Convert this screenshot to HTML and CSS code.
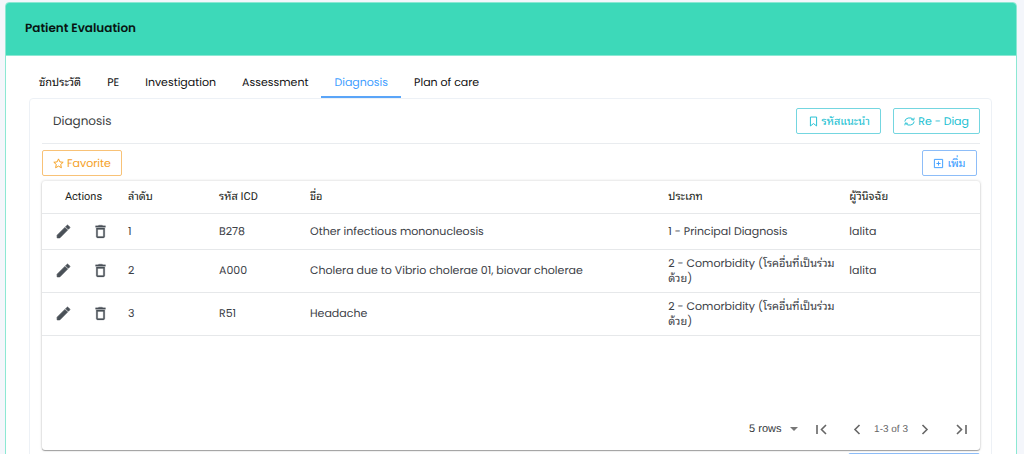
FILE: index.html
```html
<!DOCTYPE html>
<html lang="th">
<head>
<meta charset="utf-8">
<title>Patient Evaluation</title>
<link rel="stylesheet" href="styles.css">
</head>
<body>
<svg class="defs" aria-hidden="true">
  <symbol id="edit" viewBox="0 0 24 24"><path d="M3 17.25V21h3.75L17.81 9.94l-3.75-3.75L3 17.25zM20.71 7.04a1 1 0 0 0 0-1.41l-2.34-2.34a1 1 0 0 0-1.41 0l-1.83 1.83 3.75 3.75 1.83-1.83z" stroke="currentColor" stroke-width="1" stroke-linejoin="round"/></symbol>
  <symbol id="trash" viewBox="0 0 24 24"><path d="M6 19c0 1.1.9 2 2 2h8c1.1 0 2-.9 2-2V7H6v12zM8 9h8v10H8V9zm7.5-5l-1-1h-5l-1 1H5v2h14V4z" stroke="currentColor" stroke-width=".4"/></symbol>
</svg>
<main class="card">
  <header class="card-header"><h1 class="title">Patient Evaluation</h1></header>
  <div class="card-body">
    <nav class="tabs">
      <a class="tab" href="#history">ซักประวัติ</a>
      <a class="tab" href="#pe">PE</a>
      <a class="tab" href="#investigation">Investigation</a>
      <a class="tab" href="#assessment">Assessment</a>
      <a class="tab active" href="#diagnosis" aria-current="page">Diagnosis</a>
      <a class="tab" href="#plan">Plan of care</a>
    </nav>
    <section class="panel">
      <div class="panel-head">
        <h2 class="panel-title">Diagnosis</h2>
        <div class="actions">
          <button class="btn cyan" type="button"><svg class="icon" viewBox="0 0 16 16"><path d="M3.5 1.5h9v13L8 11l-4.500 3.500z"/></svg>รหัสแนะนำ</button>
          <button class="btn cyan" type="button"><svg class="icon" viewBox="0 0 16 16"><path d="M1.200 8a6.800 5.600 0 0 1 12.300-3M14.800 8a6.800 5.600 0 0 1-12.300 3M14.800 2.500l-.8 3.500-3.500-.8M1.200 13.500l.8-3.500 3.500.8"/></svg>Re - Diag</button>
        </div>
      </div>
      <div class="toolbar">
        <button class="btn orange" type="button"><svg class="icon" viewBox="0 0 16 16"><path d="M8 1.300l2 4.400 4.800.5-3.600 3.200 1 4.800L8 11.800l-4.200 2.400 1-4.800L1.200 6.200 6 5.700z"/></svg>Favorite</button>
        <button class="btn blue" type="button"><svg class="icon" viewBox="0 0 16 16"><path d="M2 2h12v12H2zM8 5v6M5 8h6"/></svg>เพิ่ม</button>
      </div>
      <div class="sheet">
        <table class="grid">
          <colgroup><col class="c-act"><col class="c-no"><col class="c-icd"><col class="c-name"><col class="c-type"><col class="c-by"></colgroup>
          <thead>
            <tr><th class="center">Actions</th><th>ลำดับ</th><th>รหัส ICD</th><th>ชื่อ</th><th>ประเภท</th><th>ผู้วินิจฉัย</th></tr>
          </thead>
          <tbody>
            <tr>
              <td class="tools"><div class="tool-row"><button class="tool" type="button" aria-label="Edit"><svg><use href="#edit"/></svg></button><button class="tool" type="button" aria-label="Delete"><svg><use href="#trash"/></svg></button></div></td>
              <td>1</td><td>B278</td><td>Other infectious mononucleosis</td><td>1 - Principal Diagnosis</td><td>lalita</td>
            </tr>
            <tr>
              <td class="tools"><div class="tool-row"><button class="tool" type="button" aria-label="Edit"><svg><use href="#edit"/></svg></button><button class="tool" type="button" aria-label="Delete"><svg><use href="#trash"/></svg></button></div></td>
              <td>2</td><td>A000</td><td>Cholera due to Vibrio cholerae 01, biovar cholerae</td><td>2 - Comorbidity (โรคอื่นที่เป็นร่วม<br>ด้วย)</td><td>lalita</td>
            </tr>
            <tr>
              <td class="tools"><div class="tool-row"><button class="tool" type="button" aria-label="Edit"><svg><use href="#edit"/></svg></button><button class="tool" type="button" aria-label="Delete"><svg><use href="#trash"/></svg></button></div></td>
              <td>3</td><td>R51</td><td>Headache</td><td>2 - Comorbidity (โรคอื่นที่เป็นร่วม<br>ด้วย)</td><td></td>
            </tr>
          </tbody>
        </table>
        <div class="pager">
          <div class="select-wrap">
            <select class="rows" aria-label="Rows per page"><option>5 rows</option><option>10 rows</option></select>
            <svg class="caret" viewBox="0 0 8 4"><path d="M0 0h8L4 4z"/></svg>
          </div>
          <button class="page" type="button" aria-label="First page"><svg viewBox="0 0 18 18"><path d="M5 5v9M14 5L9.500 9.500 14 14"/></svg></button>
          <button class="page" type="button" aria-label="Previous page"><svg viewBox="0 0 18 18"><path d="M11.500 5L7 9.500l4.500 4.500"/></svg></button>
          <span class="range">1-3 of 3</span>
          <button class="page" type="button" aria-label="Next page"><svg viewBox="0 0 18 18"><path d="M6.500 5L11 9.500 6.500 14"/></svg></button>
          <button class="page" type="button" aria-label="Last page"><svg viewBox="0 0 18 18"><path d="M5 5l4.500 4.500L5 14M14 5v9"/></svg></button>
        </div>
      </div>
      <div class="footer"><button class="save" type="button" aria-label="Save"></button></div>
    </section>
  </div>
</main>
</body>
</html>
```
FILE: styles.css
```css
* { box-sizing: border-box; }
html { height: 100%; overflow: hidden; }
body {
  margin: 0;
  padding: 2px 7px 0 5px;
  background: #f4f6fb;
  color: #3c4147;
  font: 400 11px/15px Poppins, "Noto Sans Thai Looped", Loma, Waree, Garuda, "Noto Sans Thai", "Noto Sans", sans-serif;
  text-rendering: geometricPrecision;
}
button, select { font: inherit; cursor: pointer; text-rendering: inherit; }
.defs { display: none; }
.card {
  background: #fff;
  border: 1px solid #8ce8d3;
  border-radius: 4px;
  overflow: hidden;
}
.card-header {
  padding: 16px 19px;
  background: #3dd9b9;
  border-bottom: 1px solid #8ce8d3;
}
.title { margin: 0; color: #081512; font-size: 12px; line-height: 20px; font-weight: 600; }
.card-body { padding: 14px 24px 24px 23px; }
.tabs { display: flex; }
.tab {
  padding: 5px 13px 6px;
  border-bottom: 2px solid transparent;
  color: #111;
  text-decoration: none;
  white-space: nowrap;
}
.tab:first-child { padding-left: 10px; }
.tab.active { color: #409eff; border-color: #5aa5f8; }
.panel {
  padding: 0 11px 12px 12px;
  border: 1px solid #edf1f6;
  border-radius: 4px;
}
.panel-head {
  display: flex;
  align-items: center;
  justify-content: space-between;
  height: 45px;
  padding-left: 11px;
  border-bottom: 1px solid #e9ecef;
}
.panel-title { margin: 0; color: #3a3d40; font-size: 12px; font-weight: 400; }
.actions { display: flex; gap: 12px; }
.btn {
  display: flex;
  align-items: center;
  justify-content: center;
  gap: 3px;
  height: 26px;
  padding: 0 10px;
  background: #fff;
  border: 1px solid;
  border-radius: 2px;
  white-space: nowrap;
}
.cyan { min-width: 85px; color: #22bfd2; border-color: #74d6e0; }
.orange { min-width: 80px; color: #f59f1f; border-color: #f8c277; }
.blue { min-width: 55px; color: #409eff; border-color: #8dbdf8; }
.icon { width: 11px; height: 11px; fill: none; stroke: currentColor; stroke-width: 1.4; }
.toolbar { display: flex; justify-content: space-between; padding: 6px 3px 5px 0; }
.sheet {
  display: flex;
  flex-direction: column;
  min-height: 269px;
  background: #fff;
  border-radius: 3px;
  box-shadow: 0 1px 1px #0005, 0 0 3px #0003;
}
.grid { width: 100%; border-collapse: collapse; table-layout: fixed; }
.c-act { width: 8%; }
.c-no { width: 9.7%; }
.c-icd { width: 9.7%; }
.c-name { width: 38.2%; }
.c-type { width: 19.3%; }
.c-by { width: 15.1%; }
.grid th, .grid td { padding: 6px 0 6px 11px; border-bottom: 1px solid #e6e8ea; text-align: left; }
.grid th { height: 32px; padding-block: 0; color: #1d1f21; font-weight: 400; font-family: Roboto, "Noto Sans Thai Looped", Loma, Waree, Garuda, "Noto Sans Thai", sans-serif; }
.grid td { height: 36px; }
.grid th.center { padding-left: 8px; text-align: center; }
.grid td.tools { padding: 0 8px 0 13px; }
.tool-row { display: flex; justify-content: space-between; }
.tool { display: flex; padding: 0; background: none; border: 0; color: #495057; }
.tool svg { width: 17px; height: 17px; fill: currentColor; }
.pager {
  display: flex;
  align-items: center;
  justify-content: flex-end;
  height: 42px;
  margin-top: auto;
  padding-right: 10px;
}
.select-wrap { display: flex; align-items: center; width: 49px; margin-right: 14px; }
.rows {
  flex: none;
  width: 49px;
  padding: 0;
  background: none;
  border: 0;
  color: #33373b;
  font-family: "Liberation Sans", sans-serif;
  appearance: none;
}
.caret { flex: none; width: 8px; height: 4px; margin-left: -8px; fill: #777; pointer-events: none; }
.page { display: flex; padding: 0; background: none; border: 0; }
.page svg { width: 18px; height: 18px; fill: none; stroke: #666; stroke-width: 1.6; }
.page:last-child, .page:nth-child(3) { margin-left: 18px; }
.range { padding: 0 8px; color: #666; font-size: 10px; font-family: "Liberation Sans", sans-serif; }
.footer { display: flex; justify-content: flex-end; padding-top: 3px; }
.save { width: 132px; height: 26px; background: #fff; border: 1px solid #8dbdf8; border-radius: 2px; }
```
